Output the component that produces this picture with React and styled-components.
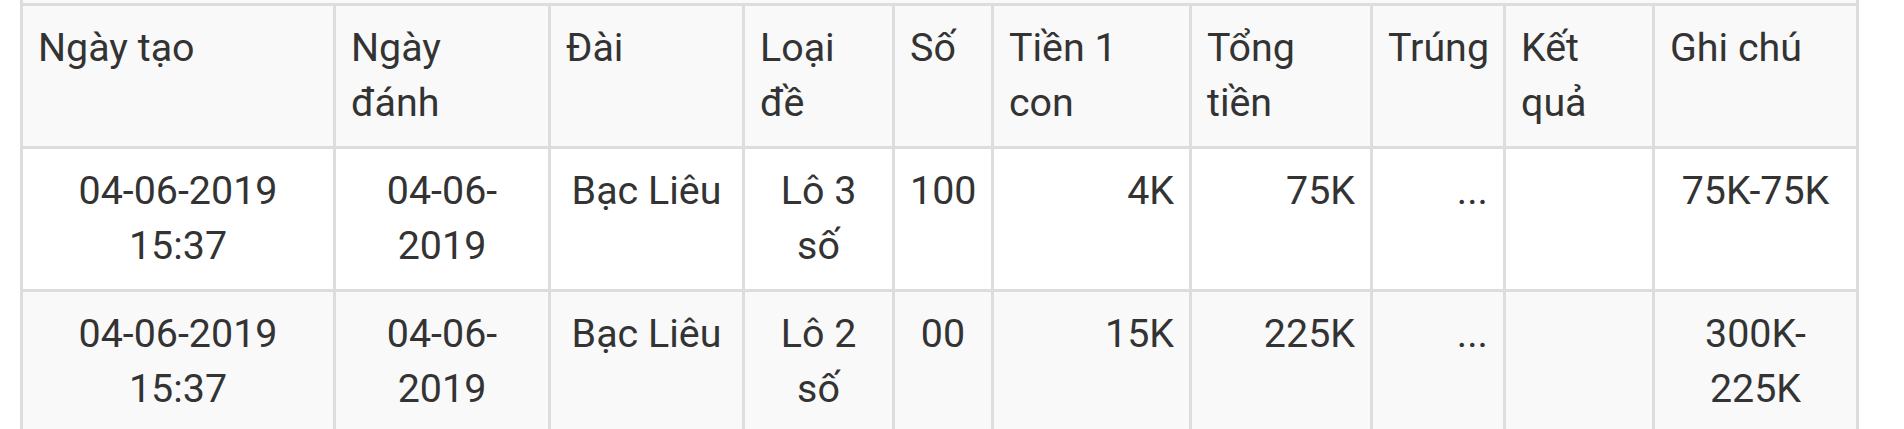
import React from "react";
import styled, { createGlobalStyle } from "styled-components";

const GlobalStyle = createGlobalStyle`
  html, body {
    margin: 0;
    padding: 0;
    background: #fff;
  }
  body {
    font-family: Roboto, "Noto Sans", sans-serif;
    color: #333;
  }
`;

const Page = styled.div`
  padding-left: 20px;
`;

// sliver of the block above the table, cut by the screenshot
const TopEdge = styled.div`
  box-sizing: border-box;
  width: 1839px;
  height: 3px;
  border-left: 3px solid #ddd;
  border-right: 3px solid #ddd;
  background: #f9f9f9;
`;

const Table = styled.table`
  box-sizing: border-box;
  width: 1839px;
  table-layout: fixed;
  border-collapse: separate;
  border-spacing: 0;
  border-left: 3px solid #ddd;
  border-top: 3px solid #ddd;
  font-size: 39.4px;
  line-height: 55px;
  color: #333;
`;

const Row = styled.tr`
  background: ${(p) => (p.$striped ? "#f9f9f9" : "#fff")};
`;

const HeadCell = styled.th`
  box-sizing: border-box;
  width: ${(p) => p.$w}px;
  padding: 14px 15px 16px;
  border-right: 3px solid #ddd;
  border-bottom: 3px solid #ddd;
  font-weight: 400;
  text-align: left;
  vertical-align: top;
`;

const Cell = styled.td`
  box-sizing: border-box;
  padding: 14px 15px 16px;
  border-right: 3px solid #ddd;
  border-bottom: 3px solid #ddd;
  text-align: ${(p) => p.$align};
  vertical-align: top;
`;

const columns = [
  { title: "Ngày tạo", w: 313, align: "center" },
  { title: "Ngày đánh", w: 215, align: "center" },
  { title: "Đài", w: 194, align: "center" },
  { title: "Loại đề", w: 150, align: "center" },
  { title: "Số", w: 99, align: "center" },
  { title: "Tiền 1 con", w: 198, align: "right" },
  { title: "Tổng tiền", w: 181, align: "right" },
  { title: "Trúng", w: 133, align: "right" },
  { title: "Kết quả", w: 149, align: "center" },
  { title: "Ghi chú", w: 204, align: "center" },
];

const rows = [
  ["04-06-2019 15:37", "04-06-2019", "Bạc Liêu", "Lô 3 số", "100", "4K", "75K", "...", "", "75K-75K"],
  ["04-06-2019 15:37", "04-06-2019", "Bạc Liêu", "Lô 2 số", "00", "15K", "225K", "...", "", "300K-225K"],
];

function App() {
  return (
    <Page>
      <GlobalStyle />
      <TopEdge />
      <Table>
        <thead>
          <Row $striped>
            {columns.map((c) => (
              <HeadCell key={c.title} $w={c.w}>
                {c.title}
              </HeadCell>
            ))}
          </Row>
        </thead>
        <tbody>
          {rows.map((r, i) => (
            <Row key={i} $striped={i % 2 === 1}>
              {r.map((v, j) => (
                <Cell key={j} $align={columns[j].align}>
                  {v}
                </Cell>
              ))}
            </Row>
          ))}
        </tbody>
      </Table>
    </Page>
  );
}

export default App;
